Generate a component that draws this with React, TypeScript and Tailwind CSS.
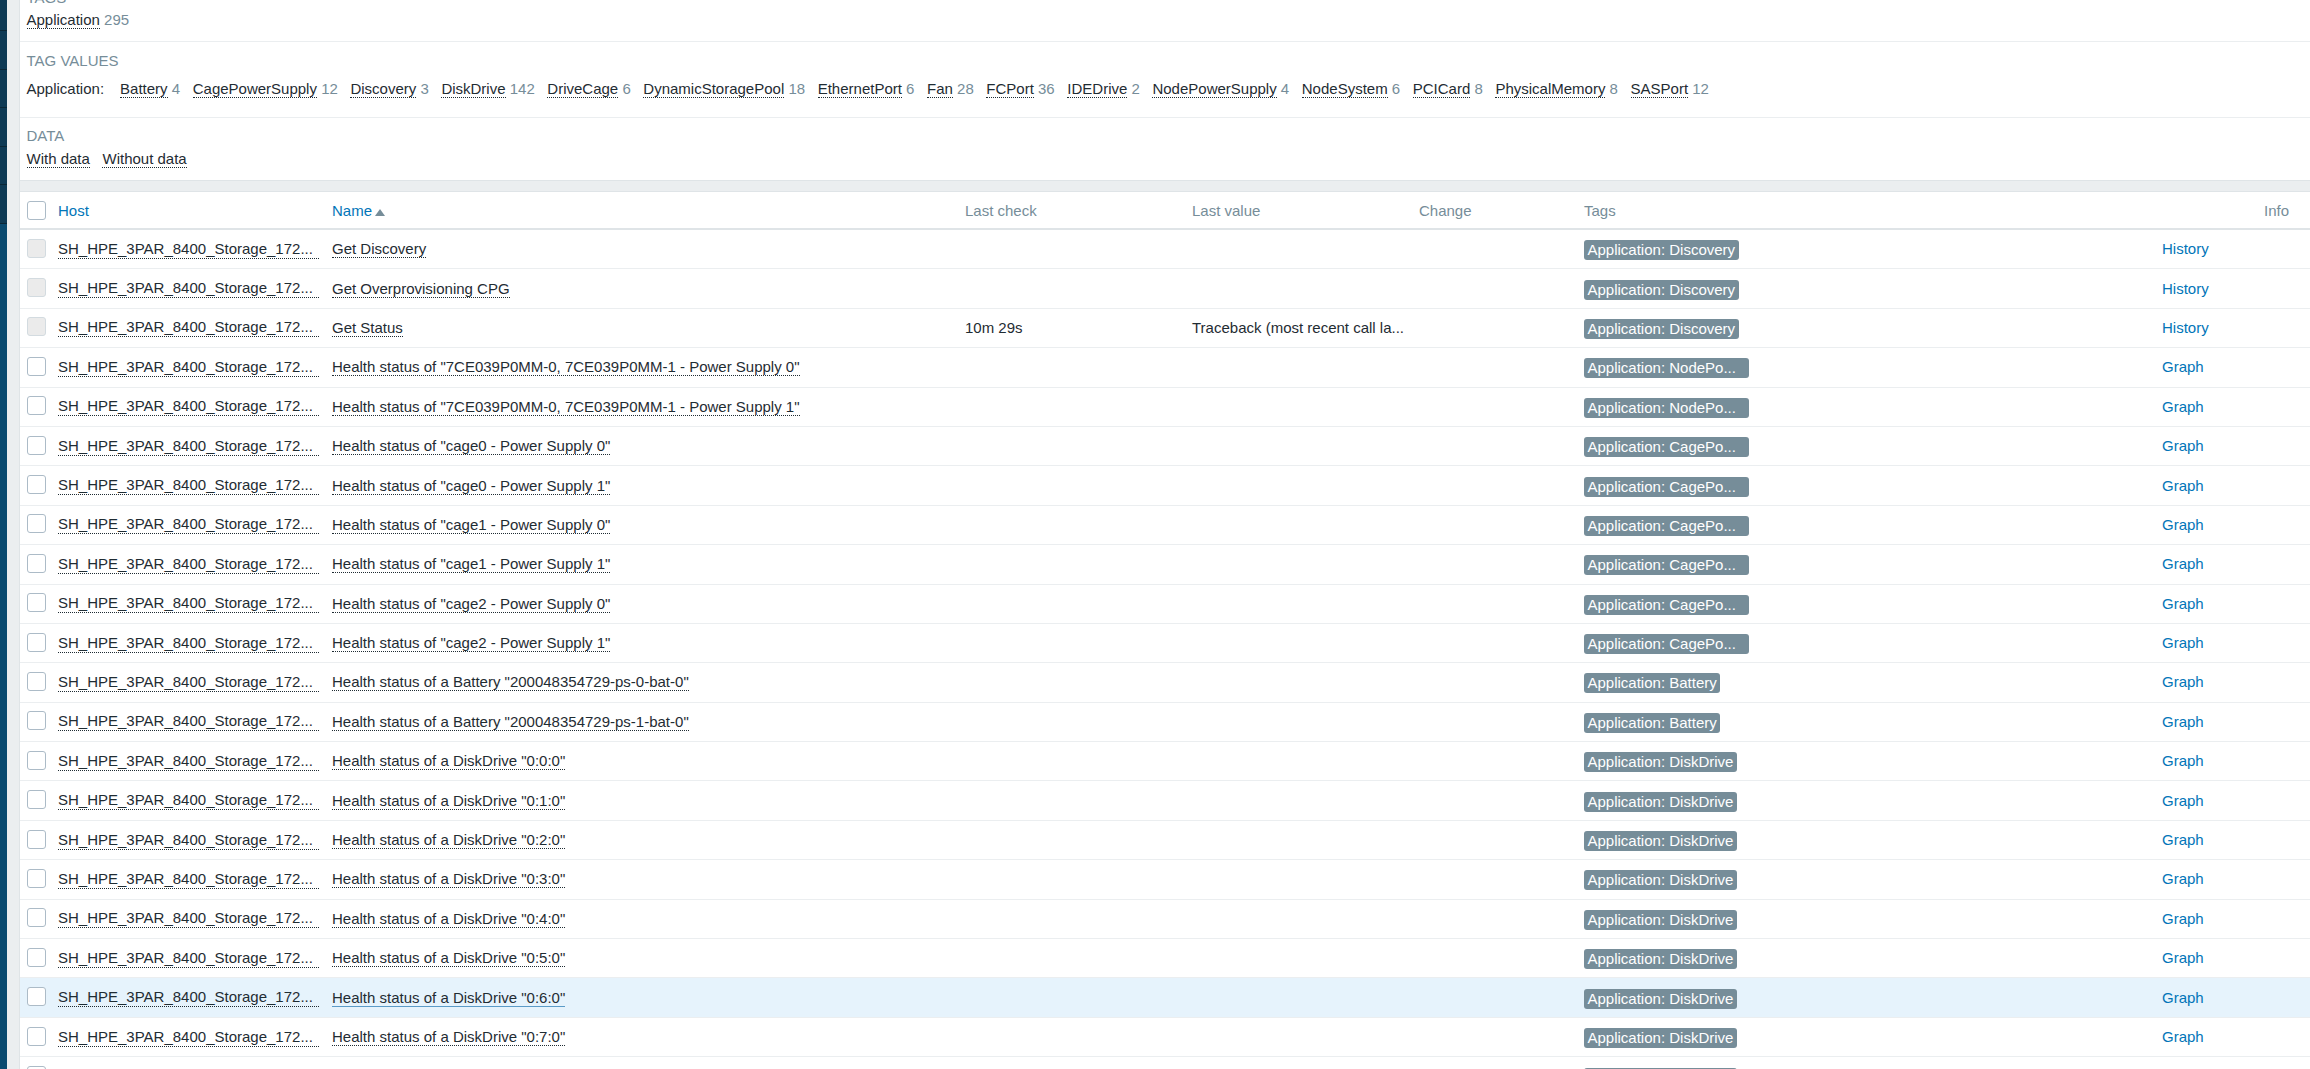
const hostName = 'SH_HPE_3PAR_8400_Storage_172...';
const rowGrid = 'grid grid-cols-[38px_274px_633px_227px_227px_165px_578px_102px_46px]';

interface Row {
  name: string;
  tag: string;
  shortTag?: boolean;
  link: string;
  disabled?: boolean;
  lastCheck?: string;
  lastValue?: string;
  hovered?: boolean;
}

const tagValues: [string, number][] = [
  ['Battery', 4],
  ['CagePowerSupply', 12],
  ['Discovery', 3],
  ['DiskDrive', 142],
  ['DriveCage', 6],
  ['DynamicStoragePool', 18],
  ['EthernetPort', 6],
  ['Fan', 28],
  ['FCPort', 36],
  ['IDEDrive', 2],
  ['NodePowerSupply', 4],
  ['NodeSystem', 6],
  ['PCICard', 8],
  ['PhysicalMemory', 8],
  ['SASPort', 12],
];

const rows: Row[] = [
  { name: 'Get Discovery', tag: 'Application: Discovery', link: 'History', disabled: true },
  { name: 'Get Overprovisioning CPG', tag: 'Application: Discovery', link: 'History', disabled: true },
  {
    name: 'Get Status',
    tag: 'Application: Discovery',
    link: 'History',
    disabled: true,
    lastCheck: '10m 29s',
    lastValue: 'Traceback (most recent call la...',
  },
  { name: 'Health status of "7CE039P0MM-0, 7CE039P0MM-1 - Power Supply 0"', tag: 'Application: NodePo...', shortTag: true, link: 'Graph' },
  { name: 'Health status of "7CE039P0MM-0, 7CE039P0MM-1 - Power Supply 1"', tag: 'Application: NodePo...', shortTag: true, link: 'Graph' },
  { name: 'Health status of "cage0 - Power Supply 0"', tag: 'Application: CagePo...', shortTag: true, link: 'Graph' },
  { name: 'Health status of "cage0 - Power Supply 1"', tag: 'Application: CagePo...', shortTag: true, link: 'Graph' },
  { name: 'Health status of "cage1 - Power Supply 0"', tag: 'Application: CagePo...', shortTag: true, link: 'Graph' },
  { name: 'Health status of "cage1 - Power Supply 1"', tag: 'Application: CagePo...', shortTag: true, link: 'Graph' },
  { name: 'Health status of "cage2 - Power Supply 0"', tag: 'Application: CagePo...', shortTag: true, link: 'Graph' },
  { name: 'Health status of "cage2 - Power Supply 1"', tag: 'Application: CagePo...', shortTag: true, link: 'Graph' },
  { name: 'Health status of a Battery "200048354729-ps-0-bat-0"', tag: 'Application: Battery', link: 'Graph' },
  { name: 'Health status of a Battery "200048354729-ps-1-bat-0"', tag: 'Application: Battery', link: 'Graph' },
  { name: 'Health status of a DiskDrive "0:0:0"', tag: 'Application: DiskDrive', link: 'Graph' },
  { name: 'Health status of a DiskDrive "0:1:0"', tag: 'Application: DiskDrive', link: 'Graph' },
  { name: 'Health status of a DiskDrive "0:2:0"', tag: 'Application: DiskDrive', link: 'Graph' },
  { name: 'Health status of a DiskDrive "0:3:0"', tag: 'Application: DiskDrive', link: 'Graph' },
  { name: 'Health status of a DiskDrive "0:4:0"', tag: 'Application: DiskDrive', link: 'Graph' },
  { name: 'Health status of a DiskDrive "0:5:0"', tag: 'Application: DiskDrive', link: 'Graph' },
  { name: 'Health status of a DiskDrive "0:6:0"', tag: 'Application: DiskDrive', link: 'Graph', hovered: true },
  { name: 'Health status of a DiskDrive "0:7:0"', tag: 'Application: DiskDrive', link: 'Graph' },
];

function DottedLink({ children }: { children: React.ReactNode }) {
  return <a className="border-b border-dotted border-[#1f2c33] text-[#1f2c33]">{children}</a>;
}

function Checkbox({ disabled }: { disabled?: boolean }) {
  return (
    <input
      type="checkbox"
      disabled={disabled}
      className={`-mt-[2px] h-[19px] w-[19px] appearance-none rounded-[3px] border ${
        disabled ? 'border-[#d3dbe0] bg-[#ebebeb]' : 'border-[#acbbc7] bg-white'
      }`}
    />
  );
}

function Tag({ children, short }: { children: React.ReactNode; short?: boolean }) {
  return (
    <span
      className={`mt-[2px] h-[20px] rounded-[3px] bg-[#768d99] px-[3.5px] leading-[20px] whitespace-nowrap text-white ${
        short ? 'w-[165px]' : 'w-fit'
      }`}
    >
      {children}
    </span>
  );
}

function Sidebar() {
  return (
    <div className="flex w-[7px] shrink-0 flex-col bg-[#0a4a70]">
      {[30, 38, 37, 38, 37, 38].map((height, i) => (
        <div
          key={i}
          className="border-b border-[#0a2636] bg-[#0e3a55]"
          style={{ height: height + 1 }}
        />
      ))}
    </div>
  );
}

export default function App() {
  return (
    <div className="flex h-[1069px] overflow-hidden bg-[#ebeef0] font-['Liberation_Sans',Arial,sans-serif] text-[15px] leading-[18px] text-[#1f2c33]">
      <Sidebar />
      <div className="ml-[12px] min-w-0 flex-1 border-l border-[#dfe4e7]">
        <div className="bg-white">
          <section className="-mt-[11px] border-b border-[#ebeef0] pb-[12px] pl-[6.5px]">
            <h4 className="text-[#768d99]">TAGS</h4>
            <div className="mt-[4px]">
              <DottedLink>Application</DottedLink> <span className="text-[#768d99]">295</span>
            </div>
          </section>

          <section className="border-b border-[#ebeef0] pt-[10px] pb-[19px] pl-[6.5px]">
            <h4 className="text-[#768d99]">TAG VALUES</h4>
            <div className="mt-[10px] flex">
              <div className="mr-[16px]">Application:</div>
              <div className="flex gap-[12.6px]">
                {tagValues.map(([label, count]) => (
                  <div key={label}>
                    <DottedLink>{label}</DottedLink> <span className="text-[#768d99]">{count}</span>
                  </div>
                ))}
              </div>
            </div>
          </section>

          <section className="pt-[9px] pb-[12px] pl-[6.5px]">
            <h4 className="text-[#768d99]">DATA</h4>
            <div className="mt-[5px] flex gap-[12.6px]">
              <div>
                <DottedLink>With data</DottedLink>
              </div>
              <div>
                <DottedLink>Without data</DottedLink>
              </div>
            </div>
          </section>
        </div>

        <div className="h-[12px] border-y border-[#dfe4e7] bg-[#ebeef0]" />

        <div className="bg-white">
          <div className={`${rowGrid} h-[38px] items-center border-b-2 border-[#dfe4e7] pt-[2px] text-[#768d99]`}>
            <div className="flex items-center pl-[7px]">
              <Checkbox />
            </div>
            <a className="text-[#0275b8]">Host</a>
            <div className="flex items-center gap-[3px]">
              <a className="text-[#0275b8]">Name</a>
              <svg width="10" height="7" viewBox="0 0 10 7" className="mt-[3px]">
                <path d="M5 0 L10 7 L0 7 Z" fill="#768d99" />
              </svg>
            </div>
            <div>Last check</div>
            <div>Last value</div>
            <div>Change</div>
            <div>Tags</div>
            <div />
            <div>Info</div>
          </div>

          {rows.map((row, i) => (
            <div
              key={i}
              className={`${rowGrid} h-[39.4px] items-center border-b border-[#ebeef0] ${
                row.hovered ? 'bg-[#e6f3fc]' : ''
              }`}
            >
              <div className="flex items-center pl-[7px]">
                <Checkbox disabled={row.disabled} />
              </div>
              <div>
                <a className="inline-block w-[261px] border-b border-dotted border-[#1f2c33] whitespace-nowrap">
                  {hostName}
                </a>
              </div>
              <div>
                {row.hovered ? (
                  <a className="border-b border-[#5b9bc7]">{row.name}</a>
                ) : (
                  <DottedLink>{row.name}</DottedLink>
                )}
              </div>
              <div>{row.lastCheck}</div>
              <div>{row.lastValue}</div>
              <div />
              <Tag short={row.shortTag}>{row.tag}</Tag>
              <a className="text-[#0275b8]">{row.link}</a>
              <div />
            </div>
          ))}

          <div className={`${rowGrid} h-[39.4px] items-center`}>
            <div className="flex items-center pl-[7px]">
              <Checkbox />
            </div>
            <div />
            <div />
            <div />
            <div />
            <div />
            <Tag>Application: DiskDrive</Tag>
          </div>
        </div>
      </div>
    </div>
  );
}
